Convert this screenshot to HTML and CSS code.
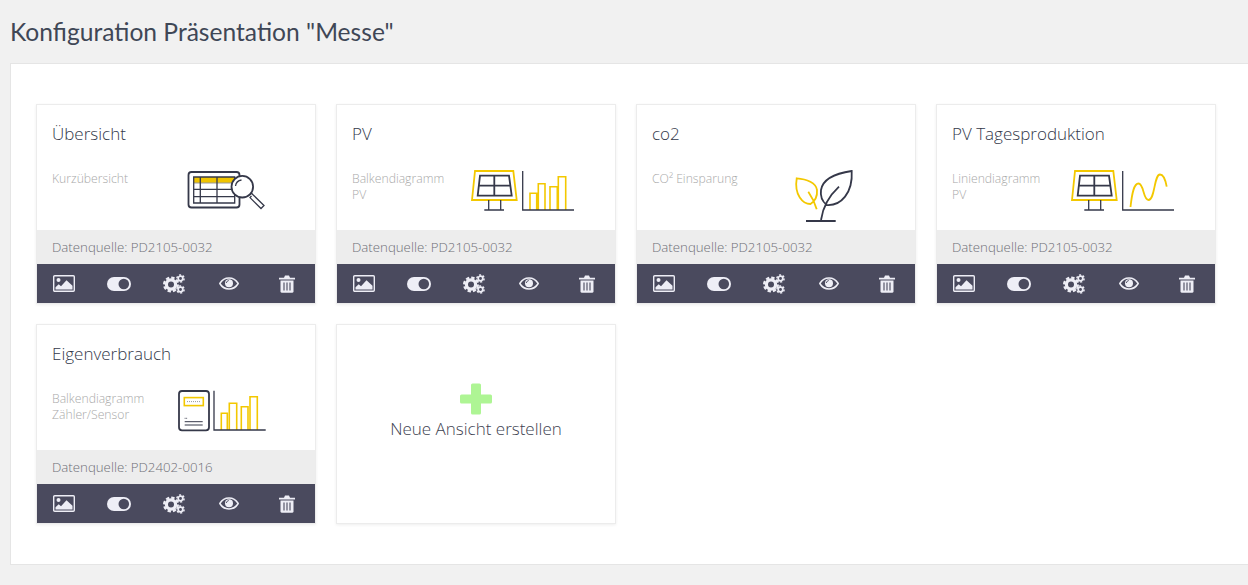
FILE: index.html
```html
<!DOCTYPE html>
<html lang="de">
<head>
<meta charset="utf-8">
<title>Konfiguration Präsentation "Messe"</title>
<link rel="stylesheet" href="styles.css">
</head>
<body>
<svg class="defs" width="0" height="0" aria-hidden="true">
  <defs>
    <symbol id="a-image" viewBox="0 0 22 17">
      <rect x=".7" y=".7" width="20.6" height="15.6" rx="1" fill="none" stroke="currentColor" stroke-width="1.4"/>
      <circle cx="5.5" cy="5" r="2" fill="currentColor"/>
      <path d="M2.5 14.5v-2.3l3.2-3 2.3 2 5.500-6 6 5.500v3.800z" fill="currentColor"/>
    </symbol>
    <symbol id="a-toggle" viewBox="0 0 24 14">
      <rect width="24" height="14" rx="7" fill="currentColor"/>
      <circle cx="16.800" cy="7" r="5.300" fill="#4a4a5e"/>
    </symbol>
    <symbol id="a-gears" viewBox="0 0 22 20">
      <circle cx="8" cy="10.500" r="4.600" fill="none" stroke="currentColor" stroke-width="3.200"/>
      <circle cx="8" cy="10.500" r="6.900" fill="none" stroke="currentColor" stroke-width="2.200" stroke-dasharray="3.400 2.020"/>
      <circle cx="17.500" cy="4.500" r="2.300" fill="none" stroke="currentColor" stroke-width="1.700"/>
      <circle cx="17.500" cy="4.500" r="3.600" fill="none" stroke="currentColor" stroke-width="1.500" stroke-dasharray="2 1.770"/>
      <circle cx="17.500" cy="15.500" r="2.300" fill="none" stroke="currentColor" stroke-width="1.700"/>
      <circle cx="17.500" cy="15.500" r="3.600" fill="none" stroke="currentColor" stroke-width="1.500" stroke-dasharray="2 1.770"/>
    </symbol>
    <symbol id="a-eye" viewBox="0 0 20 13">
      <path d="M.8 6.500C3 2.800 6.300 1 10 1s7 1.800 9.200 5.500C17 10.200 13.700 12 10 12S3 10.200.8 6.500z" fill="none" stroke="currentColor" stroke-width="1.500"/>
      <circle cx="10" cy="6.300" r="4" fill="currentColor"/>
      <path d="M7.300 6a3 3 0 0 1 2.500-2.500" fill="none" stroke="#4a4a5e" stroke-width=".9"/>
    </symbol>
    <symbol id="a-trash" viewBox="0 0 16 18">
      <path d="M0 2.800h5l1-2.300h4l1 2.300h5v1.700H0z" fill="currentColor"/>
      <path d="M1.500 5.500h13v10.700a1.500 1.500 0 0 1-1.500 1.500H3a1.500 1.500 0 0 1-1.500-1.500z" fill="currentColor"/>
      <path d="M5 7.500v8M8 7.500v8M11 7.500v8" stroke="#4a4a5e" stroke-width="1.100"/>
    </symbol>
    <g id="panel">
      <path class="ln-y" d="M12 3h38.300L53.700 32H9z"/>
      <path class="ln-d" d="M17 7.700h29l2.700 20H14.700zM31.300 7.700v20M15.800 17.700h31.700"/>
      <path class="ln-d thin" d="M25.700 32v10M37.700 32v10M21.300 42H41"/>
    </g>
  </defs>
</svg>

<h1 class="page-title">Konfiguration Präsentation "Messe"</h1>

<main class="panel">
  <div class="grid">

    <article class="card">
      <div class="card-body">
        <h2 class="card-title">Übersicht</h2>
        <div class="card-row">
          <p class="card-desc">Kurzübersicht</p>
          <svg class="illus" viewBox="0 0 120 60" role="img" aria-label="Tabelle">
            <rect x="25.500" y="4" width="51" height="35.500" rx="3" class="ln-d"/>
            <rect x="30.700" y="9" width="41" height="6" fill="#f0c400"/>
            <path class="ln-g" d="M30.700 15h42"/>
            <path class="ln-d thin" d="M30.700 9v26h41V9zM37.300 9v26M54 9v26M30.700 21.300h41M30.700 28.700h41"/>
            <circle cx="79.300" cy="18.700" r="10.800" fill="#fff" class="ln-d"/>
            <path class="ln-d thin" d="M72.500 18a7 7 0 0 1 6-6"/>
            <path class="ln-d thin" d="M86.500 27l2-1.800 1.500 1.600 11 10.700-3 3-11-10.900 1.500-1.600" fill="#fff"/>
          </svg>
        </div>
      </div>
      <div class="card-source">Datenquelle: PD2105-0032</div>
      <div class="card-actions">
        <span class="act"><svg class="i-image"><use href="#a-image"/></svg></span>
        <span class="act"><svg class="i-toggle"><use href="#a-toggle"/></svg></span>
        <span class="act"><svg class="i-gears"><use href="#a-gears"/></svg></span>
        <span class="act"><svg class="i-eye"><use href="#a-eye"/></svg></span>
        <span class="act"><svg class="i-trash"><use href="#a-trash"/></svg></span>
      </div>
    </article>

    <article class="card">
      <div class="card-body">
        <h2 class="card-title">PV</h2>
        <div class="card-row">
          <p class="card-desc">Balkendiagramm<br>PV</p>
          <svg class="illus" viewBox="0 0 120 60" role="img" aria-label="PV Balkendiagramm">
            <use href="#panel"/>
            <path class="ln-y bars" d="M67 42V25.300h6.700V42M75.300 42V15.700H82V42M87 42V18.700h7.300V42M95.300 42V8.700h7.400V42"/>
            <path class="ln-d thin" d="M59.700 3v39H111"/>
          </svg>
        </div>
      </div>
      <div class="card-source">Datenquelle: PD2105-0032</div>
      <div class="card-actions">
        <span class="act"><svg class="i-image"><use href="#a-image"/></svg></span>
        <span class="act"><svg class="i-toggle"><use href="#a-toggle"/></svg></span>
        <span class="act"><svg class="i-gears"><use href="#a-gears"/></svg></span>
        <span class="act"><svg class="i-eye"><use href="#a-eye"/></svg></span>
        <span class="act"><svg class="i-trash"><use href="#a-trash"/></svg></span>
      </div>
    </article>

    <article class="card">
      <div class="card-body">
        <h2 class="card-title">co2</h2>
        <div class="card-row">
          <p class="card-desc">CO² Einsparung</p>
          <svg class="illus" viewBox="0 0 120 60" role="img" aria-label="Pflanze">
            <path class="ln-y" d="M33.700 10.300C44 11 53 15 54 22c.5 6-2 11-6.500 14C40 36 31 27 33.700 10.300zM45.300 23.700c3.500 5 6.500 11 8.400 17.600"/>
            <path class="ln-d" d="M88.700 3C75 5 60 10 58 22c-1 7 2 12 5.700 15C78 38 90 25 88.700 3zM58 52c2-14 8-24 18-33.300M43 53h29.700"/>
          </svg>
        </div>
      </div>
      <div class="card-source">Datenquelle: PD2105-0032</div>
      <div class="card-actions">
        <span class="act"><svg class="i-image"><use href="#a-image"/></svg></span>
        <span class="act"><svg class="i-toggle"><use href="#a-toggle"/></svg></span>
        <span class="act"><svg class="i-gears"><use href="#a-gears"/></svg></span>
        <span class="act"><svg class="i-eye"><use href="#a-eye"/></svg></span>
        <span class="act"><svg class="i-trash"><use href="#a-trash"/></svg></span>
      </div>
    </article>

    <article class="card">
      <div class="card-body">
        <h2 class="card-title">PV Tagesproduktion</h2>
        <div class="card-row">
          <p class="card-desc">Liniendiagramm<br>PV</p>
          <svg class="illus" viewBox="0 0 120 60" role="img" aria-label="PV Liniendiagramm">
            <use href="#panel"/>
            <path class="ln-y" d="M67.500 39C69 25 71 15.500 75.500 15.500 81 15.500 80 32 85.500 32 92 32 91 6.500 97 6.500c4 0 5.500 5.500 6.700 12.200"/>
            <path class="ln-d thin" d="M59.700 3v39H111"/>
          </svg>
        </div>
      </div>
      <div class="card-source">Datenquelle: PD2105-0032</div>
      <div class="card-actions">
        <span class="act"><svg class="i-image"><use href="#a-image"/></svg></span>
        <span class="act"><svg class="i-toggle"><use href="#a-toggle"/></svg></span>
        <span class="act"><svg class="i-gears"><use href="#a-gears"/></svg></span>
        <span class="act"><svg class="i-eye"><use href="#a-eye"/></svg></span>
        <span class="act"><svg class="i-trash"><use href="#a-trash"/></svg></span>
      </div>
    </article>

    <article class="card">
      <div class="card-body">
        <h2 class="card-title">Eigenverbrauch</h2>
        <div class="card-row">
          <p class="card-desc">Balkendiagramm<br>Zähler/Sensor</p>
          <svg class="illus" viewBox="0 0 120 60" role="img" aria-label="Zähler Balkendiagramm">
            <rect x="16" y="3" width="30" height="39.300" rx="3" class="ln-d"/>
            <rect x="21.300" y="9.600" width="19" height="8" class="ln-y bars"/>
            <path class="ln-g" d="M24 13.600h13" stroke-dasharray="1 1"/>
            <path class="ln-d hair" d="M21.700 33.700h18M21.700 37h18M21.700 30.300h.8M23.300 30.300h.8"/>
            <path class="ln-y bars" d="M58.300 42V25.300h6V42M66.300 42V15.300h7.400V42M78.300 42V18.700H85V42M87 42V8.700h7.300V42"/>
            <path class="ln-d thin" d="M51 2.700V42h51.700"/>
          </svg>
        </div>
      </div>
      <div class="card-source">Datenquelle: PD2402-0016</div>
      <div class="card-actions">
        <span class="act"><svg class="i-image"><use href="#a-image"/></svg></span>
        <span class="act"><svg class="i-toggle"><use href="#a-toggle"/></svg></span>
        <span class="act"><svg class="i-gears"><use href="#a-gears"/></svg></span>
        <span class="act"><svg class="i-eye"><use href="#a-eye"/></svg></span>
        <span class="act"><svg class="i-trash"><use href="#a-trash"/></svg></span>
      </div>
    </article>

    <a class="card card-new" href="#">
      <svg class="plus" viewBox="0 0 32 32" aria-hidden="true"><path d="M11 2a1.500 1.500 0 0 1 1.500-1.500h7A1.500 1.500 0 0 1 21 2v9.500h9.500A1.500 1.500 0 0 1 32 13v6a1.500 1.500 0 0 1-1.500 1.500H21V30a1.500 1.500 0 0 1-1.500 1.500h-7A1.500 1.500 0 0 1 11 30v-9.500H1.500A1.500 1.500 0 0 1 0 19v-6a1.500 1.500 0 0 1 1.500-1.500H11z"/></svg>
      <span class="new-label">Neue Ansicht erstellen</span>
    </a>

  </div>
</main>
</body>
</html>
```

FILE: styles.css
```css
html, body {
  margin: 0;
  height: 100%;
  overflow: hidden;
}
body {
  background: #f1f1f1;
  font-family: "Lato", "Liberation Sans", sans-serif;
  color: #3d4453;
}
.defs {
  display: block;
  height: 0;
}
.page-title {
  margin: 0;
  padding: 0 0 0 10px;
  height: 63px;
  line-height: 63px;
  font-size: 24.6px;
  font-weight: 400;
  color: #3f4756;
}
.panel {
  margin-left: 10px;
  background: #fff;
  border: 1px solid #e5e5e5;
  border-right: 0;
  padding: 40px 25px;
}
.grid {
  display: grid;
  grid-template-columns: repeat(4, 280px);
  grid-auto-rows: 200px;
  gap: 20px;
}
.card {
  display: flex;
  flex-direction: column;
  border: 1px solid #ececec;
  box-shadow: 0 1px 3px rgba(0, 0, 0, .07);
  background: #fff;
  font-family: "Open Sans", sans-serif;
  font-weight: 300;
}
.card-body {
  flex: 1;
  padding: 0 0 0 15px;
  min-height: 0;
}
.card-title {
  margin: 0;
  padding-top: 16px;
  height: 47px;
  box-sizing: border-box;
  line-height: 26px;
  font-size: 17px;
  font-weight: 300;
  color: #33384a;
}
.card-row {
  display: flex;
  margin-top: 16px;
}
.card-desc {
  flex: none;
  width: 111px;
  margin: 0;
  padding-top: 3px;
  font-size: 12.2px;
  line-height: 16px;
  color: #a9a9a9;
}
.illus {
  flex: none;
  width: 120px;
  height: 60px;
}
.ln-y, .ln-d, .ln-g {
  fill: none;
  stroke-width: 1.800;
}
.ln-y { stroke: #f3c800; }
.ln-d { stroke: #353849; }
.ln-g { stroke: #999; stroke-width: 1; }
.thin { stroke-width: 1.300; }
.bars { stroke-width: 1.600; }
.hair { stroke-width: 1; }
rect.ln-d { fill: none; }
circle.ln-d { fill: #fff; }
.card-source {
  flex: none;
  height: 34px;
  line-height: 34px;
  padding-left: 15px;
  background: #ededed;
  color: #6f6f77;
  font-size: 13.25px;
}
.card-actions {
  flex: none;
  display: flex;
  height: 39px;
  background: #4a4a5e;
  color: #eeeef6;
}
.act {
  flex: none;
  width: 55px;
  display: flex;
  align-items: center;
  justify-content: center;
}
.act:first-child {
  margin-left: -1px;
}
.act:last-child {
  margin-left: 3px;
}
.i-image { width: 22px; height: 17px; }
.i-toggle { width: 24px; height: 14px; }
.i-gears { width: 22px; height: 20px; }
.i-eye { width: 20px; height: 13px; }
.i-trash { width: 16px; height: 18px; }
.card-new {
  align-items: center;
  text-decoration: none;
  padding-top: 58px;
  box-sizing: border-box;
}
.plus {
  width: 32px;
  height: 32px;
  fill: #aef594;
}
.new-label {
  margin-top: 2px;
  line-height: 24px;
  font-size: 17px;
  color: #3d4250;
}
```
